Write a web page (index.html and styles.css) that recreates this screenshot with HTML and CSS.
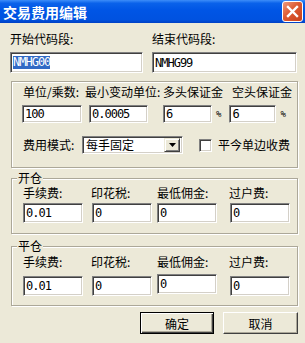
FILE: index.html
```html
<!DOCTYPE html>
<html lang="zh-CN">
<head>
    <meta charset="UTF-8">
    <meta name="viewport" content="width=device-width, initial-scale=1.0">
    <title>交易费用编辑</title>
    <link rel="stylesheet" href="styles.css">
</head>
<body>
    <div class="titlebar">
        <span class="title">交易费用编辑</span>
        <span class="close">
            <svg width="13" height="13" viewBox="0 0 13 13">
                <path d="M2 2 L11 11 M11 2 L2 11" stroke="#fff" stroke-width="2.4" stroke-linecap="square"/>
            </svg>
        </span>
    </div>

    <div class="content">
        <div class="codes">
            <div class="code-field start">
                <div class="lbl">开始代码段:</div>
                <div class="edit tall"><span class="sel">NMHG00</span></div>
            </div>
            <div class="code-field end">
                <div class="lbl">结束代码段:</div>
                <div class="edit tall">NMHG99</div>
            </div>
        </div>

        <div class="group unit">
            <div class="unit-labels">
                <span class="w1">单位/乘数:</span>
                <span class="w2">最小变动单位:</span>
                <span class="w3">多头保证金</span>
                <span>空头保证金</span>
            </div>
            <div class="unit-inputs">
                <div class="edit e1">100</div>
                <div class="edit e2">0.0005</div>
                <div class="edit e3">6</div>
                <span class="pct">%</span>
                <div class="edit e4">6</div>
                <span class="pct">%</span>
            </div>
            <div class="fee-row">
                <span class="fee-label">费用模式:</span>
                <div class="combo">
                    <span class="combo-text">每手固定</span>
                    <span class="combo-btn">
                        <svg width="7" height="4" viewBox="0 0 7 4"><path d="M0 0 H7 L3.5 4 Z" fill="#000"/></svg>
                    </span>
                </div>
                <span class="check"></span>
                <span class="check-label">平今单边收费</span>
            </div>
        </div>

        <div class="group fees open">
            <span class="legend">开仓</span>
            <div class="fee-grid">
                <span>手续费:</span>
                <span>印花税:</span>
                <span>最低佣金:</span>
                <span>过户费:</span>
                <div class="edit f1">0.01</div>
                <div class="edit f2">0</div>
                <div class="edit f3">0</div>
                <div class="edit f4">0</div>
            </div>
        </div>

        <div class="group fees close-pos">
            <span class="legend">平仓</span>
            <div class="fee-grid">
                <span>手续费:</span>
                <span>印花税:</span>
                <span>最低佣金:</span>
                <span>过户费:</span>
                <div class="edit f1">0.01</div>
                <div class="edit f2">0</div>
                <div class="edit f3 raised">0</div>
                <div class="edit f4">0</div>
            </div>
        </div>

        <div class="actions">
            <button class="btn default">确定</button>
            <button class="btn">取消</button>
        </div>
    </div>
</body>
</html>
```

FILE: styles.css
```css
body{
    margin: 0;
    width: 305px;
    height: 343px;
    overflow: hidden;
    background-color: #ECE9D8;
    font-family: "Noto Sans CJK SC", sans-serif;
    font-size: 12px;
    line-height: 14px;
    color: #000;
}
.titlebar{
    height: 23px;
    box-sizing: border-box;
    padding: 0 2px 0 3px;
    display: flex;
    align-items: center;
    justify-content: space-between;
    background: linear-gradient(to bottom, #3D8DF9 0%, #0A62EA 14%, #0055E5 45%, #0052E0 85%, #0040C4 100%);
}
.title{
    color: #fff;
    font-weight: bold;
    font-size: 14px;
    line-height: 16px;
}
.close{
    width: 21px;
    height: 21px;
    box-sizing: border-box;
    border: 1px solid #fff;
    border-radius: 3px;
    background: linear-gradient(135deg, #EE9A7C 0%, #DD5A32 45%, #C8401A 100%);
    display: flex;
    align-items: center;
    justify-content: center;
}

.content{
    padding: 8px 0 0 10px;
}
.codes{
    display: flex;
    gap: 9px;
}
.code-field .lbl{
    line-height: 16px;
    margin-bottom: 5px;
}
.start{
    width: 133px;
}
.end{
    width: 145px;
}

/* sunken edit box */
.edit{
    box-sizing: border-box;
    background: #fff;
    border-top: 1px solid #808080;
    border-left: 1px solid #808080;
    border-right: 1px solid #fff;
    border-bottom: 1px solid #fff;
    box-shadow: inset 1px 1px 0 #404040, inset -1px -1px 0 #D4D0C8;
    padding: 0 2px;
    height: 20px;
    display: flex;
    align-items: center;
    font-family: "DejaVu Sans Mono", monospace;
    font-size: 12px;
    letter-spacing: -1px;
    white-space: nowrap;
}
.edit.tall{
    height: 21px;
}
.sel{
    background: #316AC5;
    color: #fff;
    line-height: 13px;
}

/* etched group box */
.group{
    position: relative;
    margin-left: 1px;
    width: 287px;
    box-sizing: border-box;
    border: 1px solid #ACA899;
    box-shadow: inset 1px 1px 0 #fff, 1px 1px 0 #fff;
}
.legend{
    position: absolute;
    top: -8px;
    left: 5px;
    padding: 0 1px;
    background: #ECE9D8;
}

.unit{
    margin-top: 8px;
    padding: 3px 0 13px 10px;
}
.unit-labels{
    display: flex;
    padding-left: 1px;
    white-space: nowrap;
}
.unit-labels .w1{ width: 62px; }
.unit-labels .w2{ width: 78px; }
.unit-labels .w3{ width: 69px; }
.unit-inputs{
    margin-top: 6px;
    display: flex;
    align-items: center;
}
.unit-inputs .edit{
    height: 18px;
}
.e1{ width: 60px; }
.e2{ width: 59px; margin-left: 7px; }
.e3{ width: 49px; margin-left: 15px; }
.e4{ width: 47px; margin-left: 8px; }
.pct{
    margin-left: 4px;
    font-family: "DejaVu Sans Mono", monospace;
    font-size: 9px;
}

.fee-row{
    margin-top: 13px;
    display: flex;
    align-items: center;
}
.fee-label{
    width: 59px;
    padding-left: 1px;
}
.combo{
    width: 101px;
    height: 18px;
    box-sizing: border-box;
    background: #fff;
    border-top: 1px solid #808080;
    border-left: 1px solid #808080;
    border-right: 1px solid #fff;
    border-bottom: 1px solid #fff;
    box-shadow: inset 1px 1px 0 #404040, inset -1px -1px 0 #D4D0C8;
    padding: 2px 2px 2px 3px;
    display: flex;
    align-items: center;
    justify-content: space-between;
}
.combo-btn{
    width: 16px;
    height: 14px;
    box-sizing: border-box;
    background: #ECE9D8;
    border-top: 1px solid #ECE9D8;
    border-left: 1px solid #ECE9D8;
    border-right: 1px solid #404040;
    border-bottom: 1px solid #404040;
    box-shadow: inset 1px 1px 0 #fff, inset -1px -1px 0 #808080;
    display: flex;
    align-items: center;
    justify-content: center;
}
.check{
    width: 13px;
    height: 13px;
    margin-left: 16px;
    box-sizing: border-box;
    background: #fff;
    border-top: 1px solid #808080;
    border-left: 1px solid #808080;
    border-right: 1px solid #fff;
    border-bottom: 1px solid #fff;
    box-shadow: inset 1px 1px 0 #404040, inset -1px -1px 0 #D4D0C8;
}
.check-label{
    margin-left: 6px;
}

.fees.open{
    margin-top: 10px;
    padding: 7px 0 10px 11px;
}
.fees.close-pos{
    margin-top: 12px;
    padding: 8px 0 9px 11px;
}
.fee-grid{
    display: grid;
    grid-template-columns: 68px 66px 72px 60px;
    row-gap: 3px;
    white-space: nowrap;
}
.close-pos .fee-grid{
    row-gap: 7px;
}
.f1{ width: 60px; }
.f2{ width: 60px; margin-left: 1px; }
.f3{ width: 60px; }
.f4{ width: 60px; margin-left: 1px; }
.raised{
    margin-top: -2px;
    margin-bottom: 2px;
}

.actions{
    width: 288px;
    margin-top: 6px;
    display: flex;
    justify-content: flex-end;
    gap: 9px;
}
.btn{
    height: 22px;
    width: 75px;
    box-sizing: border-box;
    background: #ECE9D8;
    border: 1px solid;
    border-color: #fff #404040 #404040 #fff;
    box-shadow: inset -1px -1px 0 #ACA899;
    font-family: "Noto Sans CJK SC", sans-serif;
    font-size: 12px;
    padding: 0;
    color: #000;
}
.btn.default{
    width: 74px;
    border-color: #000;
    box-shadow: inset 1px 1px 0 #fff, inset -1px -1px 0 #404040, inset -2px -2px 0 #ACA899;
}
```
